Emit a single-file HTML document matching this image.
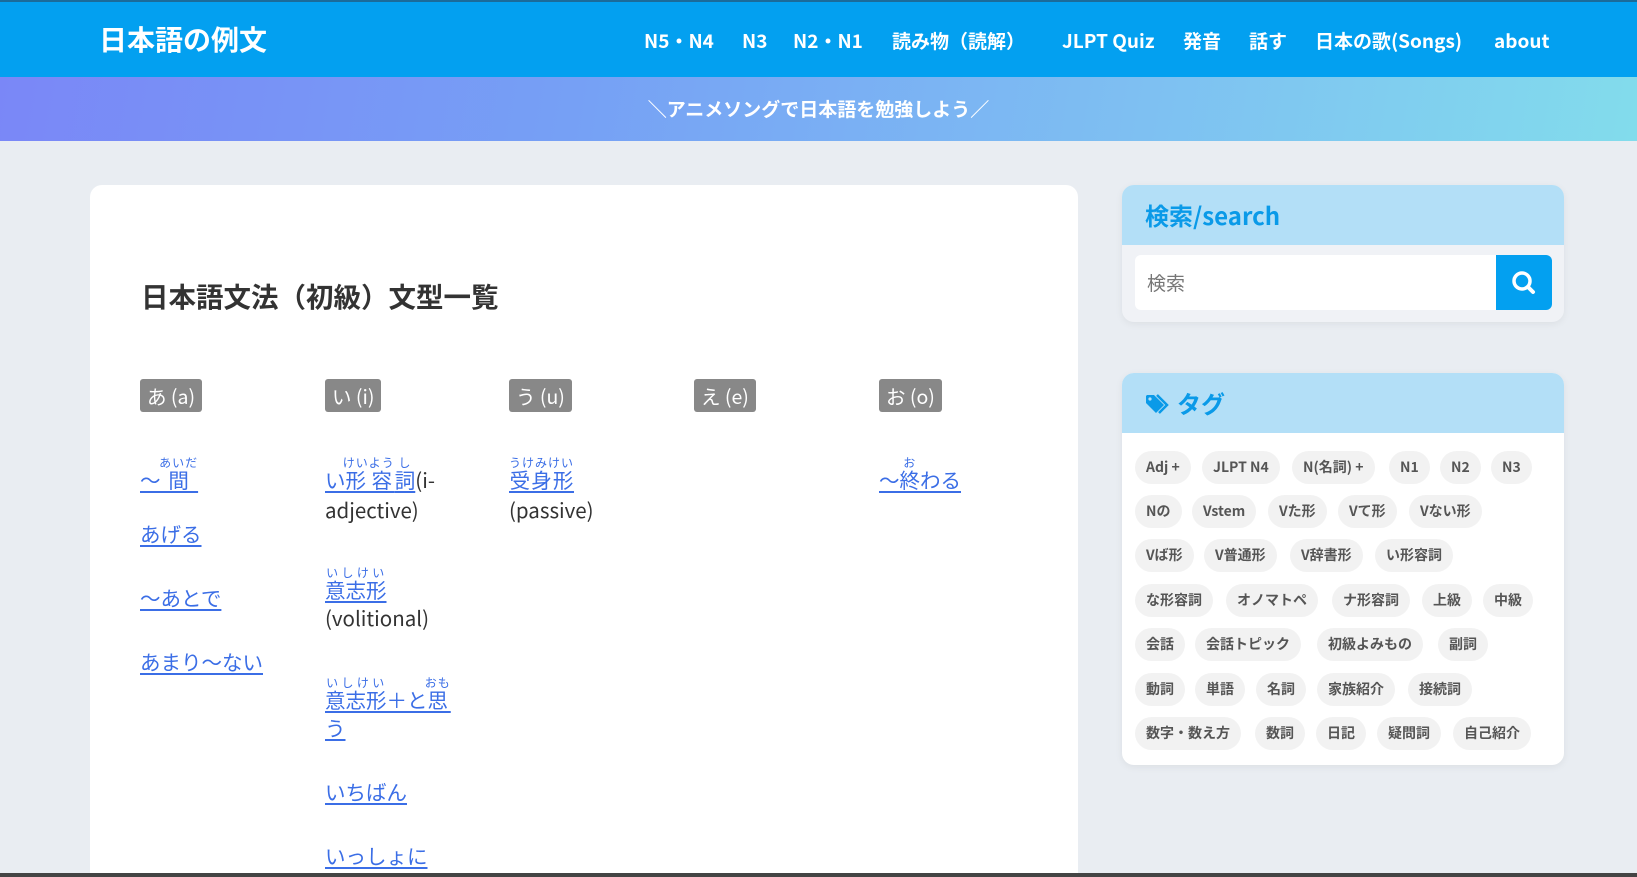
<!DOCTYPE html>
<html><head><meta charset="utf-8"><style>
*{margin:0;padding:0;box-sizing:border-box}
html,body{width:1637px;height:877px;overflow:hidden}
body{background:#e9edf2;font-family:"Noto Sans CJK JP","Liberation Sans",sans-serif;position:relative}
.hdr{position:absolute;left:0;top:0;width:1637px;height:77px;background:#03a0f0;border-top:2px solid #1b6b9a}
.logo{position:absolute;left:99px;top:0;line-height:75px;font-size:28px;font-weight:bold;color:#fff}
.nav{position:absolute;top:0;line-height:77px;font-size:19px;font-weight:bold;color:#fff;white-space:nowrap}
.ban{position:absolute;left:0;top:77px;width:1637px;height:64px;background:linear-gradient(100deg,#7a87f7 0%,#76a0f5 35%,#7ec0f2 70%,#82dcec 100%);color:#fff;font-weight:bold;font-size:19px;text-align:center;line-height:64px}
.card{position:absolute;left:90px;top:185px;width:988px;height:692px;background:#fff;border-radius:12px 12px 0 0}
h1{position:absolute;left:141px;top:276px;font-size:27.5px;line-height:38px;color:#333;font-weight:bold}
.bdg{position:absolute;top:379px;height:33px;line-height:33px;background:#888;color:#fff;font-size:19.5px;padding:0 7px;border-radius:3px}
.it{position:absolute;font-size:20.5px;line-height:26px;white-space:nowrap;color:#333}
.it a{color:#3b6ee6;text-decoration:underline;text-underline-offset:3px}
rt{font-size:12px;color:#3b6ee6;letter-spacing:1px}
.box{position:absolute;left:1122px;width:442px;border-radius:12px;overflow:hidden;box-shadow:0 2px 8px rgba(0,0,0,.06)}
.bh{height:60px;background:#b3dff7;color:#0a9ae8;font-weight:bold;font-size:24px;line-height:60px;padding-left:23px}
.tag{position:absolute;height:33px;line-height:33px;background:#f2f2f2;color:#555;font-weight:bold;font-size:14px;padding:0 11px;border-radius:17px;white-space:nowrap}
</style></head><body>
<div class="hdr">
<div class="logo">日本語の例文</div>
<div class="nav" style="left:644px">N5・N4</div>
<div class="nav" style="left:742px">N3</div>
<div class="nav" style="left:793px">N2・N1</div>
<div class="nav" style="left:892px">読み物（読解）</div>
<div class="nav" style="left:1062px">JLPT Quiz</div>
<div class="nav" style="left:1183px">発音</div>
<div class="nav" style="left:1249px">話す</div>
<div class="nav" style="left:1315px">日本の歌(Songs)</div>
<div class="nav" style="left:1494px">about</div>
</div>
<div class="ban">＼アニメソングで日本語を勉強しよう／</div>
<div class="card"></div>
<h1>日本語文法（初級）文型一覧</h1>
<div class="bdg" style="left:140px">あ (a)</div>
<div class="bdg" style="left:325px">い (i)</div>
<div class="bdg" style="left:509px">う (u)</div>
<div class="bdg" style="left:694px">え (e)</div>
<div class="bdg" style="left:879px">お (o)</div>

<div class="it" style="left:140px;top:456px"><a>～ <ruby>間<rt>あいだ</rt></ruby> </a></div>
<div class="it" style="left:140px;top:520px"><a>あげる</a></div>
<div class="it" style="left:140px;top:584px"><a>～あとで</a></div>
<div class="it" style="left:140px;top:648px"><a>あまり～ない</a></div>

<div class="it" style="left:325px;top:456px"><a>い<ruby>形<rt>けい</rt></ruby> <ruby>容<rt>よう</rt></ruby><ruby>詞<rt>し</rt></ruby></a>(i-</div>
<div class="it" style="left:325px;top:496px">adjective)</div>
<div class="it" style="left:325px;top:566px"><a><ruby>意志形<rt>いしけい</rt></ruby></a></div>
<div class="it" style="left:325px;top:604px">(volitional)</div>
<div class="it" style="left:325px;top:676px"><a><ruby>意志形<rt>いしけい</rt></ruby>＋と<ruby>思<rt>おも</rt></ruby></a></div>
<div class="it" style="left:325px;top:714px"><a>う</a></div>
<div class="it" style="left:325px;top:778px"><a>いちばん</a></div>
<div class="it" style="left:325px;top:842px"><a>いっしょに</a></div>

<div class="it" style="left:509px;top:456px"><a> <ruby>受身形<rt>うけみけい</rt></ruby></a></div>
<div class="it" style="left:509px;top:496px">(passive)</div>
<div class="it" style="left:879px;top:456px"><a>～<ruby>終<rt>お</rt></ruby>わる</a></div>

<div class="box" style="top:185px;height:137px;background:#f0f2f6">
<div class="bh">検索/search</div>
<div style="position:absolute;left:13px;top:70px;width:361px;height:55px;background:#fff;border-radius:6px 0 0 6px;color:#777;font-size:19px;line-height:55px;padding-left:12px">検索</div>
<div style="position:absolute;left:374px;top:70px;width:56px;height:55px;background:#03a0f0;border-radius:0 6px 6px 0">
<svg width="56" height="55" viewBox="0 0 56 55"><circle cx="26" cy="26" r="8" fill="none" stroke="#fff" stroke-width="3.5"/><line x1="32" y1="32" x2="37" y2="37" stroke="#fff" stroke-width="4" stroke-linecap="round"/></svg></div>
</div>

<div class="box" style="top:373px;height:392px;background:#fff">
<div class="bh"><svg width="26" height="22" viewBox="0 0 26 22" style="vertical-align:-3px;margin-right:6px"><path d="M1 2v7l10 10 8-8L9 1H2z" fill="#0a9ae8"/><circle cx="5" cy="5" r="1.6" fill="#b3dff7"/><path d="M12 1l10 10-8 8" fill="none" stroke="#0a9ae8" stroke-width="2.5"/></svg>タグ</div>
</div>
<div class="tag" style="left:1135px;top:451px">Adj +</div>
<div class="tag" style="left:1202px;top:451px">JLPT N4</div>
<div class="tag" style="left:1292px;top:451px">N(名詞) +</div>
<div class="tag" style="left:1389px;top:451px">N1</div>
<div class="tag" style="left:1440px;top:451px">N2</div>
<div class="tag" style="left:1491px;top:451px">N3</div>
<div class="tag" style="left:1135px;top:495px">Nの</div>
<div class="tag" style="left:1192px;top:495px">Vstem</div>
<div class="tag" style="left:1268px;top:495px">Vた形</div>
<div class="tag" style="left:1338px;top:495px">Vて形</div>
<div class="tag" style="left:1409px;top:495px">Vない形</div>
<div class="tag" style="left:1135px;top:539px">Vば形</div>
<div class="tag" style="left:1204px;top:539px">V普通形</div>
<div class="tag" style="left:1290px;top:539px">V辞書形</div>
<div class="tag" style="left:1375px;top:539px">い形容詞</div>
<div class="tag" style="left:1135px;top:584px">な形容詞</div>
<div class="tag" style="left:1226px;top:584px">オノマトペ</div>
<div class="tag" style="left:1332px;top:584px">ナ形容詞</div>
<div class="tag" style="left:1422px;top:584px">上級</div>
<div class="tag" style="left:1483px;top:584px">中級</div>
<div class="tag" style="left:1135px;top:628px">会話</div>
<div class="tag" style="left:1195px;top:628px">会話トピック</div>
<div class="tag" style="left:1317px;top:628px">初級よみもの</div>
<div class="tag" style="left:1438px;top:628px">副詞</div>
<div class="tag" style="left:1135px;top:673px">動詞</div>
<div class="tag" style="left:1195px;top:673px">単語</div>
<div class="tag" style="left:1256px;top:673px">名詞</div>
<div class="tag" style="left:1317px;top:673px">家族紹介</div>
<div class="tag" style="left:1408px;top:673px">接続詞</div>
<div class="tag" style="left:1135px;top:717px">数字・数え方</div>
<div class="tag" style="left:1255px;top:717px">数詞</div>
<div class="tag" style="left:1316px;top:717px">日記</div>
<div class="tag" style="left:1377px;top:717px">疑問詞</div>
<div class="tag" style="left:1453px;top:717px">自己紹介</div>

<div style="position:absolute;left:0;top:873px;width:1637px;height:4px;background:#444"></div>
</body></html>
